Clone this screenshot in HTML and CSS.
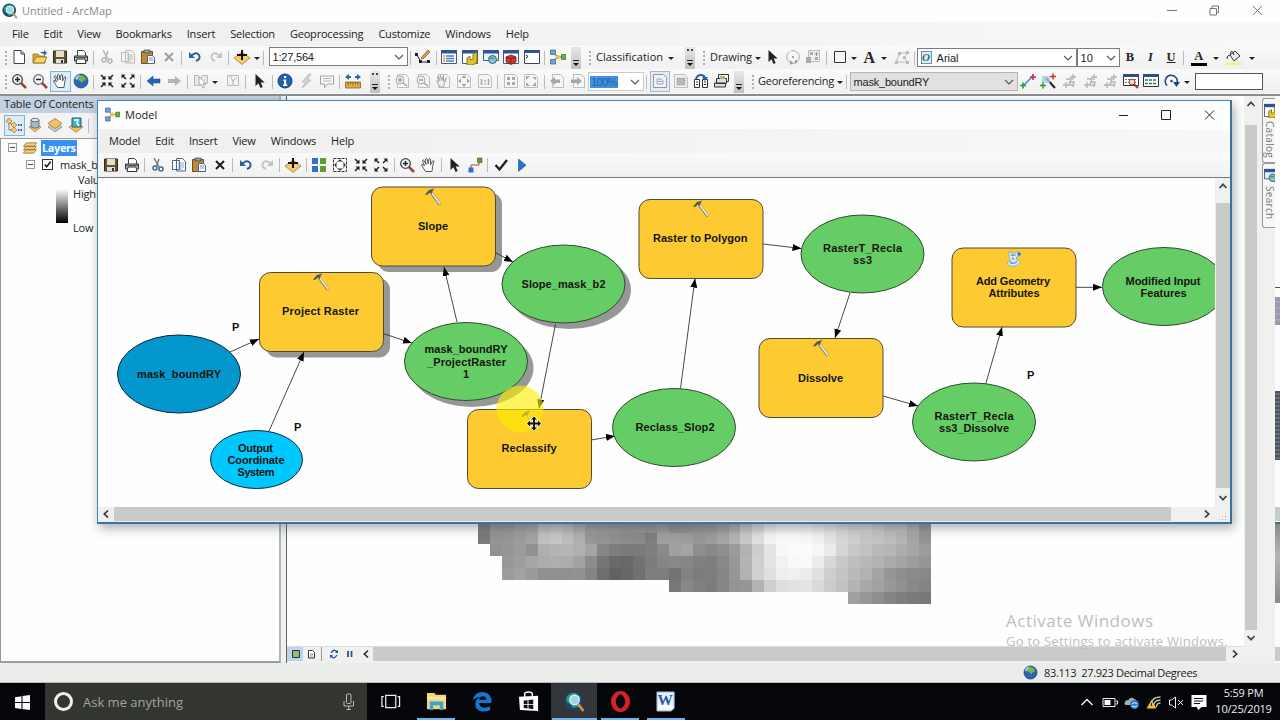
FILE: index.html
```
<!DOCTYPE html>
<html lang="en">
<head>
    <meta charset="UTF-8">
    <title>Untitled - ArcMap</title>
    <link rel="stylesheet" href="styles.css">
</head>
<body>
    <!-- Icons -->
    <svg class="sprite">
        <symbol id="new" viewBox="0 0 16 16"><path d="M3 1.500h7l3.500 3.500v9.500H3z" fill="#fff" stroke="#444"/><path d="M10 1.500V5h3.500" fill="none" stroke="#444"/></symbol>
        <symbol id="open" viewBox="0 0 16 16"><path d="M1 14V5h5l1 2h6v7z" fill="#d9a928" stroke="#8f6f1c" stroke-width=".8"/><path d="M1 14l3-6h11l-3 6z" fill="#f7d568" stroke="#8f6f1c" stroke-width=".8"/><path d="M8 4q2-2 4-1V1l3 3-3 3V5q-2-1-4-1z" fill="#2b66a8"/></symbol>
        <symbol id="save" viewBox="0 0 16 16"><path d="M1.500 2h13v12h-13z" fill="#5f5536" stroke="#2e2a1c"/><path d="M4 2h8v6H4z" fill="#e8dfc0"/><path d="M4 10h8v4H4z" fill="#ddd"/><path d="M9 11h2v3H9z" fill="#333"/></symbol>
        <symbol id="print" viewBox="0 0 16 16"><path d="M4.500 1.500h6l2 2V8h-8z" fill="#fff" stroke="#444"/><path d="M1.500 7h13v5h-13z" fill="#bbb" stroke="#333"/><path d="M4 10h8l1 4.500H3z" fill="#fff" stroke="#333"/><path d="M2 8.500h12" stroke="#555"/></symbol>
        <symbol id="cut" viewBox="0 0 16 16"><g fill="none" stroke="#446a90" stroke-width="1.500"><path d="M4 1l5 9M9 2L6.500 9" stroke="#778"/><circle cx="5" cy="11" r="2"/><circle cx="11" cy="12" r="2"/></g></symbol>
        <symbol id="cutg" viewBox="0 0 16 16"><g fill="none" stroke="#b4b4b4" stroke-width="1.500"><path d="M4 1l5 9M9 2L6.500 9"/><circle cx="5" cy="11" r="2"/><circle cx="11" cy="12" r="2"/></g></symbol>
        <symbol id="copy" viewBox="0 0 16 16"><g fill="#fff" stroke="#51677f"><path d="M1.500 3.500h7v9h-7zM5.500 1.500h6l3 3v9.500h-9z"/><path d="M7 6h6M7 8h6M7 10h6M7 12h4" stroke="#6a95c5" stroke-width=".8"/></g></symbol>
        <symbol id="copyg" viewBox="0 0 16 16"><g fill="#f4f4f4" stroke="#bbb"><path d="M1.500 3.500h7v9h-7zM5.500 1.500h6l3 3v9.500h-9z"/><path d="M7 6h6M7 8h6M7 10h6M7 12h4"/></g></symbol>
        <symbol id="paste" viewBox="0 0 16 16"><path d="M1.500 2.500h11v12h-11z" fill="#c08a38" stroke="#6d4e1e"/><path d="M4 1h6v3H4z" fill="#999" stroke="#444" stroke-width=".7"/><path d="M7.500 6.500h5l2 2v6h-7z" fill="#fff" stroke="#51677f"/><path d="M9 9h4M9 11h4" stroke="#6a95c5"/></symbol>
        <symbol id="del" viewBox="0 0 16 16"><path d="M4 4l8 8M12 4l-8 8" stroke="#1c1c1c" stroke-width="2"/></symbol>
        <symbol id="delg" viewBox="0 0 16 16"><path d="M4 4l8 8M12 4l-8 8" stroke="#9a9a9a" stroke-width="1.800"/></symbol>
        <symbol id="undo" viewBox="0 0 16 16"><path d="M4 7q5-5 8-1q2 4-3 6" fill="none" stroke="#2f5f9e" stroke-width="2"/><path d="M2 3v6h6z" fill="#2f5f9e"/></symbol>
        <symbol id="redo" viewBox="0 0 16 16"><path d="M12 7Q7 2 4 6q-2 4 3 6" fill="none" stroke="#c2c2c2" stroke-width="1.800"/><path d="M14 3v6H8z" fill="#c2c2c2"/></symbol>
        <symbol id="add" viewBox="0 0 16 16"><path d="M0 9l8-6 8 6-8 6.500z" fill="#f3cb72" stroke="#a8812f" stroke-width=".8"/><path d="M8 1v10M3 6h10" stroke="#111" stroke-width="2"/></symbol>
        <symbol id="editor" viewBox="0 0 16 16"><path d="M2 6l4 7h8" fill="none" stroke="#222"/><path d="M0 4h3v3H0zM4 11h3v3H4zM12 11h3v3h-3z" fill="#222"/><path d="M6 9l7-8 2 2-7 7z" fill="#d9a34c" stroke="#6d4e1e" stroke-width=".7"/></symbol>
        <symbol id="winlist" viewBox="0 0 16 16"><path d="M.5 1.500h15v13H.5z" fill="#fff" stroke="#445a80"/><path d="M0 1h16v3.500H0z" fill="#2f5597"/><path d="M2 7h2M2 9.500h2M2 12h2" stroke="#d58a2a" stroke-width="1.300"/><path d="M5 7h8M5 9.500h8M5 12h8" stroke="#3f7fbf" stroke-width="1.300"/></symbol>
        <symbol id="wincat" viewBox="0 0 16 16"><path d="M.5 1.500h15v13H.5z" fill="#fff" stroke="#445a80"/><path d="M0 1h16v3.500H0z" fill="#2f5597"/><path d="M5 9l3-2v4l3-1V5l4-2v11l-5 2H5z" fill="#e3c32b" stroke="#77630e" stroke-width=".8"/></symbol>
        <symbol id="winsearch" viewBox="0 0 16 16"><path d="M.5 1.500h15v10H.5z" fill="#e6eef6" stroke="#445a80"/><path d="M0 1h16v3.500H0z" fill="#2f5597"/><circle cx="9.500" cy="10.500" r="4" fill="#8ac4dc" stroke="#2c5d7c"/><path d="M7 10q2-2 4 0" stroke="#4c9b42" stroke-width="1.600" fill="none"/></symbol>
        <symbol id="toolbox" viewBox="0 0 16 16"><path d="M.5 1.500h15v13H.5z" fill="#fff" stroke="#445a80"/><path d="M0 1h16v3.500H0z" fill="#2f5597"/><path d="M3 8l5-2 5 2v5l-5 2.500-5-2.500z" fill="#c53a2c" stroke="#6f1a12" stroke-width=".8"/><path d="M3 8l5 2 5-2M8 10v5" stroke="#6f1a12" fill="none" stroke-width=".7"/></symbol>
        <symbol id="python" viewBox="0 0 16 16"><path d="M.5 1.500h15v13H.5z" fill="#fff" stroke="#3a4662"/><path d="M0 1h16v3H0z" fill="#2f5597"/><path d="M2 6l2 1.500L2 9" fill="none" stroke="#222"/></symbol>
        <symbol id="model" viewBox="0 0 16 16"><path d="M3 4l5 4-5 4M8 8h6" fill="none" stroke="#555"/><path d="M.5 1h5v4.500H.5zM.5 10.500h5V15H.5z" fill="#6da2dc" stroke="#34618f" stroke-width=".7"/><path d="M5 8l3-2.500L11 8l-3 2.500z" fill="#f1c232"/><path d="M11.500 5.500h4v5h-4z" fill="#62b946" stroke="#2f6b1e" stroke-width=".7"/></symbol>
        <symbol id="zoomin" viewBox="0 0 16 16"><path d="M10 10l5 5" stroke="#8f4a3a" stroke-width="2.500"/><circle cx="6.500" cy="6.500" r="4.800" fill="#f4f8fb" stroke="#444" stroke-width="1.300"/><path d="M4 6.500h5M6.500 4v5" stroke="#222" stroke-width="1.500"/></symbol>
        <symbol id="zoomout" viewBox="0 0 16 16"><path d="M10 10l5 5" stroke="#8f4a3a" stroke-width="2.500"/><circle cx="6.500" cy="6.500" r="4.800" fill="#f4f8fb" stroke="#666" stroke-width="1.300"/><path d="M4 6.500h5" stroke="#222" stroke-width="1.500"/></symbol>
        <symbol id="pan" viewBox="0 0 16 16"><path d="M5.500 14.500L1.500 8q0-1.500 2 0L4.500 9 2.500 3.500q.5-1.500 1.500 0l2 4L5.500 2q1-1.500 1.700 0l1 5L9 2q1-1.200 1.600.2L10.500 8l2-4q1.300-.8 1.300.5L12.500 10l-.5 4.500z" fill="#fff" stroke="#4a4a4a" stroke-width=".9"/></symbol>
        <symbol id="globe" viewBox="0 0 16 16"><circle cx="8" cy="8" r="7" fill="#2b65b5" stroke="#1d3f6e" stroke-width=".7"/><path d="M6 3q3-2 6 1l1 3-3 1-1 2-2-2-2-1z" fill="#77b843"/><path d="M2 6q1-4 5-4.500L4 7z" fill="#9fd0f2"/></symbol>
        <symbol id="fixin" viewBox="0 0 16 16"><path d="M2 2l4 4M14 2l-4 4M2 14l4-4M14 14l-4-4" stroke="#222" stroke-width="1.600"/><path d="M6.500 2.500v4h-4zM9.500 2.500v4h4zM6.500 13.500v-4h-4zM9.500 13.500v-4h4z" fill="#222"/></symbol>
        <symbol id="fixout" viewBox="0 0 16 16"><path d="M3 3l3 3M13 3l-3 3M3 13l3-3M13 13l-3-3" stroke="#222" stroke-width="1.500"/><path d="M1.500 1.500h4l-4 4zM14.500 1.500h-4l4 4zM1.500 14.500h4l-4-4zM14.500 14.500h-4l4-4z" fill="#222"/></symbol>
        <symbol id="back" viewBox="0 0 16 16"><path d="M1 8l6-5v3h7v4H7v3z" fill="#2765b8" stroke="#1b4a8a" stroke-width=".5"/></symbol>
        <symbol id="fwd" viewBox="0 0 16 16"><path d="M15 8L9 3v3H2v4h7v3z" fill="#b4b4b4"/></symbol>
        <symbol id="selg" viewBox="0 0 16 16"><path d="M1.500 2.500h4l2 3 2-3h5v8l-4 1-9 1z" fill="#e9e9e9" stroke="#b8b8b8"/><path d="M6 4v9l2-2 2 4 1.500-1L10 10.500h3z" fill="#fff" stroke="#aaa"/></symbol>
        <symbol id="clearg" viewBox="0 0 16 16"><path d="M2.500 2.500h11v10h-11z" fill="#f3f3f3" stroke="#bbb"/><path d="M5 3l3 5 4-4M8 8v4" stroke="#b0b0b0" fill="none"/></symbol>
        <symbol id="arrow" viewBox="0 0 16 16"><path d="M4.500 1v12l3-2.800 2 4.800 2.200-1-2-4.500h4z" fill="#222"/></symbol>
        <symbol id="info" viewBox="0 0 16 16"><circle cx="8" cy="8" r="7" fill="#2261b2" stroke="#123c77"/><path d="M7 3h2.200v2H7zM6.500 6.500h2.700v5h1V13H6v-1.500h1V8h-.7z" fill="#fff"/></symbol>
        <symbol id="bolt" viewBox="0 0 16 16"><path d="M11 1L4 9h4l-4 6 9-8H9l4-6z" fill="#d6d6d6" stroke="#bbb"/></symbol>
        <symbol id="popup" viewBox="0 0 16 16"><path d="M1.500 3h13v8h-6l-3 3.500V11h-4z" fill="#fafafa" stroke="#a2a2a2"/><path d="M4 5.500h8M4 8h8" stroke="#b5b5b5"/></symbol>
        <symbol id="measure" viewBox="0 0 16 16"><path d="M.5 9h15v6H.5z" fill="#e1a844" stroke="#8c6420" stroke-width=".8"/><path d="M3 9v3M5.500 9v2M8 9v3M10.500 9v2M13 9v3" stroke="#6d4e1e" stroke-width=".8"/><path d="M0 4l4-3v2h2v2H4v2zM16 4l-4-3v2h-2v2h2v2z" fill="#2b64ad"/></symbol>
        <symbol id="pg" viewBox="0 0 16 16"><path d="M3.500 1.500h8l3 3v10h-11z" fill="#f6f6f6" stroke="#bdbdbd"/></symbol>
        <symbol id="pgin" viewBox="0 0 16 16"><use href="#pg"/><circle cx="6" cy="7" r="4" fill="#eee" stroke="#a8a8a8"/><path d="M4 7h4M6 5v4M9 10l4 3" stroke="#a0a0a0" stroke-width="1.500"/></symbol>
        <symbol id="pgout" viewBox="0 0 16 16"><use href="#pg"/><circle cx="6" cy="7" r="4" fill="#eee" stroke="#a8a8a8"/><path d="M4 7h4M9 10l4 3" stroke="#a0a0a0" stroke-width="1.500"/></symbol>
        <symbol id="pgpan" viewBox="0 0 16 16"><use href="#pg"/><path d="M5 14L1.500 8l2 .5-1-5 2 4 1-5 1.500 5 1.500-5v6l3-4-2 6-1 3.500z" fill="#eee" stroke="#a8a8a8"/></symbol>
        <symbol id="pgfull" viewBox="0 0 16 16"><path d="M1.500 1.500h10l3 3v10h-13z" fill="#f6f6f6" stroke="#bdbdbd"/><path d="M8 2l2.500 3h-5zM8 14l2.500-3h-5zM2 8l3-2.500v5zM14 8l-3-2.500v5z" fill="#a5a5a5"/></symbol>
        <symbol id="pg11" viewBox="0 0 16 16"><path d="M1.500 1.500h10l3 3v10h-13z" fill="#f6f6f6" stroke="#bdbdbd"/><path d="M4.500 6v6M11.500 6v6M8 7v1.500M8 10v1.500" stroke="#a5a5a5" stroke-width="1.500"/></symbol>
        <symbol id="pgfix" viewBox="0 0 16 16"><path d="M1.500 1.500h10l3 3v10h-13z" fill="#f6f6f6" stroke="#bdbdbd"/><path d="M4 4h3v3H4zM9 4h3v3H9zM4 9h3v3H4zM9 9h3v3H9z" fill="#a8a8a8"/></symbol>
        <symbol id="pgfix2" viewBox="0 0 16 16"><path d="M1.500 1.500h10l3 3v10h-13z" fill="#f6f6f6" stroke="#bdbdbd"/><path d="M3 3h4L3 7zM13 4v3L9 4zM3 13V9l4 4zM13 13H9l4-4z" fill="#a8a8a8"/></symbol>
        <symbol id="pgback" viewBox="0 0 16 16"><use href="#pg"/><path d="M1 8l5-4v2.500h5v3.500H6v2.500z" fill="#a8a8a8"/></symbol>
        <symbol id="pgfwd" viewBox="0 0 16 16"><use href="#pg"/><path d="M12 8L7 4v2.500H1v3.500h6v2.500z" fill="#a8a8a8"/></symbol>
        <symbol id="draft" viewBox="0 0 16 16"><path d="M1.500 1.500h10l3 3v10h-13z" fill="#eef1f5" stroke="#8c97a8"/><path d="M5 6h4l2 2v3H5zM6 8.500h4" fill="none" stroke="#9aa5b5"/></symbol>
        <symbol id="focus" viewBox="0 0 16 16"><path d="M1.500 1.500h10l3 3v10h-13z" fill="#f1f1f1" stroke="#bdbdbd"/><path d="M4 5h8v7H4z" fill="#b9b9b9" stroke="#999" stroke-dasharray="1 1"/></symbol>
        <symbol id="swap" viewBox="0 0 16 16"><path d="M1.500 6.500h5v8h-5zM9.500 6.500h5v8h-5z" fill="#fff" stroke="#333"/><path d="M3 6q1-4 5-4 3 0 4 3" fill="none" stroke="#2560ab" stroke-width="2"/><path d="M9 4h6l-3 4z" fill="#2560ab"/><path d="M3 9h2M3 11.500h2M11 9h2M11 11.500h2" stroke="#333"/></symbol>
        <symbol id="pages" viewBox="0 0 16 16"><path d="M4.500 1.500h10v7h-10z" fill="#fff" stroke="#333"/><path d="M2.500 5.500h10v5h-10zM.5 10h11v4H.5z" fill="#ddd" stroke="#333"/><path d="M6 3h5v3H6z" fill="#9cb98a"/></symbol>
        <symbol id="rot" viewBox="0 0 16 16"><circle cx="8" cy="8" r="6.300" fill="none" stroke="#aaa" stroke-dasharray="12 1.500"/><path d="M5 11l3 3-3 2zM10 11v4l3-3z" fill="#999"/><circle cx="8" cy="8" r="1" fill="#888"/></symbol>
        <symbol id="grp" viewBox="0 0 16 16"><path d="M3.500 1.500h11v11h-11z" fill="#eee" stroke="#bbb"/><path d="M5 3h3v3H5zM10 8h3v3h-3zM1 8h5v6H1z" fill="#aaa"/><path d="M11.500 3v4M9.500 5h4" stroke="#999"/></symbol>
        <symbol id="rect" viewBox="0 0 16 16"><path d="M2.500 2.500h11v11h-11z" fill="#f4f4f4" stroke="#333"/></symbol>
        <symbol id="vertex" viewBox="0 0 16 16"><path d="M2 13l4-9h8l-4 5 4 4z" fill="none" stroke="#bbb"/><path d="M4 3h3v3H4zM12 2h3v3h-3zM1 12h3v3H1zM12 12h3v3h-3zM9 7h3v3H9z" fill="#bbb"/></symbol>
        <symbol id="bucket" viewBox="0 0 16 16"><path d="M4 6l5-4 5 5-6 5z" fill="#eee" stroke="#333"/><path d="M4 5Q6-1 8 6M4 6q-3 0-3 4" stroke="#333" fill="none"/><path d="M0 13.500h16V16H0z" fill="#f3f08a"/></symbol>
        <symbol id="ctrl" viewBox="0 0 16 16"><path d="M4 12l8-8" stroke="#3e7fcf" stroke-width="1.500"/><path d="M0 12.500h6M3 9.500v6" stroke="#249a3b" stroke-width="1.600"/><path d="M10 4h6M13 1v6" stroke="#d02c2c" stroke-width="1.600"/></symbol>
        <symbol id="auto" viewBox="0 0 16 16"><path d="M6 5l9 10" stroke="#222" stroke-width="2"/><path d="M2 3h8v7H2z" fill="#9bd0e8" opacity=".8"/><path d="M0 12.500h6M3 9.500v6" stroke="#249a3b" stroke-width="1.500"/><path d="M10 3.500h6M13 .5v6" stroke="#d02c2c" stroke-width="1.500"/></symbol>
        <symbol id="ctrlg" viewBox="0 0 16 16"><path d="M2 12h6M5 9v6M9 4h6M12 1v6M5 6h5l-2 6h4M8 9h5l-1 5" fill="none" stroke="#b4b4b4" stroke-width="1.400"/></symbol>
        <symbol id="viewlink" viewBox="0 0 16 16"><path d="M.5 1.500h15v11H.5z" fill="#fff" stroke="#333"/><path d="M0 1h16v3H0z" fill="#2c4e84"/><path d="M2 6.500h12M2 9.500h12" stroke="#3d8a61" stroke-dasharray="2 1"/><circle cx="9" cy="9" r="3" fill="#e9d5cb" stroke="#a33"/><path d="M11 11l4 4" stroke="#a33" stroke-width="2"/></symbol>
        <symbol id="linktab" viewBox="0 0 16 16"><path d="M.5 1.500h15v12H.5z" fill="#fff" stroke="#333"/><path d="M0 1h16v3H0z" fill="#2c4e84"/><path d="M2 7h12M2 10.500h12" stroke="#347a52" stroke-width="1.500" stroke-dasharray="3 1"/></symbol>
        <symbol id="rotate" viewBox="0 0 16 16"><path d="M3 12.500A6 6 0 1 1 13 10" fill="none" stroke="#27447e" stroke-width="1.700"/><path d="M9 9h7l-3.500 5z" fill="#27447e"/><circle cx="7.500" cy="8" r="1.300" fill="#27447e"/></symbol>
        <symbol id="grid4" viewBox="0 0 16 16"><path d="M1 1h6v6H1zM1 9h6v6H1z" fill="#2e6fd1"/><path d="M9 1h6v6H9zM9 9h6v6H9z" fill="#5f9f2d"/></symbol>
        <symbol id="extent" viewBox="0 0 16 16"><path d="M1.500 1.500h13v13h-13z" fill="#fff" stroke="#333" stroke-dasharray="3 1"/><circle cx="8" cy="8" r="4.500" fill="none" stroke="#888"/><path d="M8 2l2 2.500H6zM8 14l2-2.500H6zM2 8l2.500-2v4zM14 8l-2.500-2v4z" fill="#333"/></symbol>
        <symbol id="connect" viewBox="0 0 16 16"><path d="M4 11V8h8V4" fill="none" stroke="#a04a3a"/><path d="M1.500 10.500h5v5h-5z" fill="#2e6fd1"/><path d="M10.500 1h4.500v4.500h-4.500z" fill="#5f9f2d" stroke="#365f19" stroke-width=".6"/></symbol>
        <symbol id="check" viewBox="0 0 16 16"><path d="M2.500 8l4 4.500L14 3" fill="none" stroke="#222" stroke-width="2.400"/></symbol>
        <symbol id="run" viewBox="0 0 16 16"><path d="M4.500 2l7.500 6.200-7.500 6.200z" fill="#2273d3" stroke="#1b549c" stroke-width=".6"/></symbol>
        <symbol id="order" viewBox="0 0 16 16"><path d="M3 5v8h5M3 6l5 2" stroke="#a07a35" fill="none"/><path d="M0 4l3-3 3 3-3 3zM5 8l3-3 3 3-3 3zM5 13l3-3 3 3-3 3z" fill="#f3c66b" stroke="#a07a35" stroke-width=".7"/><path d="M12 8h4M12 13h4" stroke="#333" stroke-width="1.500" stroke-dasharray="1.500 1"/></symbol>
        <symbol id="source" viewBox="0 0 16 16"><path d="M2 10l6-3 6 3-6 5z" fill="#efc05e" stroke="#a07a35" stroke-width=".7"/><path d="M4 3v7q4 2.500 8 0V3z" fill="#a9b5c9" stroke="#525d70" stroke-width=".8"/><ellipse cx="8" cy="3" rx="4" ry="1.700" fill="#e4eaf3" stroke="#525d70" stroke-width=".8"/></symbol>
        <symbol id="visib" viewBox="0 0 16 16"><path d="M1 10l7-4.500L15 10l-7 5z" fill="#c3c3c3" stroke="#888" stroke-width=".7"/><path d="M1 6.500L8 1.500l7 5-7 5z" fill="#f0c26a" stroke="#a07a35" stroke-width=".8"/></symbol>
        <symbol id="selec" viewBox="0 0 16 16"><path d="M1 10l7-4.500L15 10l-7 5.500z" fill="#efc05e" stroke="#a07a35" stroke-width=".7"/><path d="M4 1h9v9H4z" fill="#3fb5c8" stroke="#2c5d7c"/><path d="M6 3h4l-1 3 2 3" stroke="#fff" stroke-width="1.500" fill="none"/></symbol>
        <symbol id="layers" viewBox="0 0 16 16"><path d="M1 14l3-4h11l-3 4zM1 10.500l3-4h11l-3 4zM1 7l3-4h11l-3 4z" fill="#f0cf86" stroke="#9a7433" stroke-width=".9"/></symbol>
        <symbol id="hammer" viewBox="0 0 18 18"><path d="M6.500 4.500l9 12" stroke="#8f8a78" stroke-width="3"/><path d="M7 4.500l8.500 11.500" stroke="#f0ecd9" stroke-width="1.500"/><path d="M.5 6.500l4-4.500L10 .5 8 3 7.500 6l-2-1.500-3 2.500z" fill="#55585a"/></symbol>
        <symbol id="script" viewBox="0 0 16 16"><path d="M3 1l4 2 6-2 2 2-1 2-3 1-1 3q3 0 4 3-1 3-5 3.500H3L1 12l4-1.500Q2 7 3 1z" fill="#dcecf8" stroke="#77a8d0" stroke-width=".8"/><path d="M5 4q2 2 5 0M4 12q4 2 7-1M6 7l2 2" stroke="#5b9fd4" stroke-width="1.500" fill="none"/><circle cx="13" cy="3.500" r="1.800" fill="#2c7ac0"/></symbol>
        <symbol id="up" viewBox="0 0 10 10"><path d="M1.500 7L5 3.300 8.500 7" fill="none" stroke="#444" stroke-width="1.700"/></symbol>
        <symbol id="down" viewBox="0 0 10 10"><path d="M1.500 3L5 6.700 8.500 3" fill="none" stroke="#444" stroke-width="1.700"/></symbol>
        <symbol id="chev" viewBox="0 0 10 10"><path d="M1 3l4 4 4-4" fill="none" stroke="#555" stroke-width="1.100"/></symbol>
        <symbol id="left" viewBox="0 0 10 10"><path d="M7 1.500L3.300 5 7 8.500" fill="none" stroke="#333" stroke-width="1.700"/></symbol>
        <symbol id="right" viewBox="0 0 10 10"><path d="M3 1.500L6.700 5 3 8.500" fill="none" stroke="#333" stroke-width="1.700"/></symbol>
        <symbol id="arcmap" viewBox="0 0 20 20"><circle cx="9" cy="9" r="8.500" fill="#174a72"/><path d="M2 7q3-6 9-5l5 4-3 3 1 6-6 1q-1-4-5-5z" fill="#2f9a7d"/><circle cx="10" cy="8.500" r="4.500" fill="#9fd3e6" stroke="#e3f1f5" stroke-width="1.300"/><path d="M13.500 12.500l5 6.500" stroke="#c79a52" stroke-width="2.500"/></symbol>
    </svg>

    <header class="titlebar">
        <svg class="app-icon"><use href="#arcmap"/></svg>
        <span>Untitled - ArcMap</span>
        <svg class="win-buttons" viewBox="0 0 100 20"><path d="M0 9.500h10M43 7.500h6.500V14H43zM45 7V5h6.500v6.500H50M86 5l9 9M95 5l-9 9" fill="none" stroke="#777"/></svg>
    </header>
    <nav class="menubar">
        <span>File</span><span>Edit</span><span>View</span><span>Bookmarks</span><span>Insert</span><span>Selection</span><span>Geoprocessing</span><span>Customize</span><span>Windows</span><span>Help</span>
    </nav>

    <div class="toolrow">
        <div class="toolbar standard">
            <div class="tools" data-icons=": new open save print | cutg copyg paste delg | undo redo | add v |"></div>
            <div class="combo scale">1:27,564<svg><use href="#chev"/></svg></div>
            <div class="tools" data-icons="| editor | winlist wincat winsearch toolbox python | model"></div>
            <div class="overflow"></div>
        </div>
        <div class="toolbar classification">
            <div class="tools" data-icons=":"></div><span class="label">Classification</span><div class="tools" data-icons="v"></div>
            <div class="overflow dots"></div>
        </div>
        <div class="toolbar drawing">
            <div class="tools" data-icons=":"></div><span class="label">Drawing</span>
            <div class="tools" data-icons="v arrow rot grp | rect v"></div>
            <b class="letter big">A</b>
            <div class="tools" data-icons="v _ vertex |"></div>
            <div class="combo font"><i class="font-badge">O</i>Arial<svg><use href="#chev"/></svg></div>
            <div class="combo size">10<svg><use href="#chev"/></svg></div>
            <b class="letter">B</b><i class="letter">I</i><u class="letter">U</u>
            <div class="tools" data-icons="|"></div>
            <b class="letter color">A</b>
            <div class="tools" data-icons="_ v _ bucket _ v"></div>
        </div>
    </div>
    <div class="toolrow">
        <div class="toolbar nav">
            <div class="tools" data-icons=": zoomin zoomout pan* globe | fixin fixout | back fwd | selg v _ clearg | arrow | info bolt popup | measure"></div>
            <div class="overflow dots"></div>
        </div>
        <div class="toolbar layout">
            <div class="tools" data-icons=": pgin pgout pgpan pgfull pg11 | pgfix pgfix2 | pgback pgfwd"></div>
            <div class="combo percent"><em>100%</em><svg><use href="#chev"/></svg></div>
            <div class="tools" data-icons="| draft* focus swap pages"></div>
            <div class="overflow"></div>
        </div>
        <div class="toolbar georef">
            <div class="tools" data-icons=":"></div><span class="label">Georeferencing</span>
            <div class="tools" data-icons="v |"></div>
            <div class="combo layer">mask_boundRY<svg><use href="#chev"/></svg></div>
            <div class="tools" data-icons="ctrl auto ctrlg ctrlg ctrlg viewlink linktab rotate v"></div>
            <div class="textbox"></div>
        </div>
    </div>

    <main>
        <aside class="toc">
            <div class="toc-title">Table Of Contents</div>
            <div class="tools toc-tools" data-icons="order* source visib selec |"></div>
            <div class="tree">
                <div class="row"><span class="expander"></span><svg class="layer-icon"><use href="#layers"/></svg><b class="selected">Layers</b></div>
                <div class="row child"><span class="expander"></span><span class="checkbox"><svg viewBox="0 0 10 10"><path d="M2 5l2 2.500L8.500 2" fill="none" stroke="#111" stroke-width="1.600"/></svg></span>mask_boundRY</div>
                <div class="value">Value</div>
                <div class="legend">
                    <div class="ramp"></div>
                    <div class="range"><span>High</span><span>Low</span></div>
                </div>
            </div>
        </aside>

        <section class="mapview">
            <div class="map">
                <svg id="raster" class="raster"></svg>
                <div class="watermark"><p class="wm-title">Activate Windows</p><p class="wm-sub">Go to Settings to activate Windows.</p></div>
            </div>
            <div class="map-bottom">
                <svg class="view-tabs" viewBox="0 0 74 14"><path d="M0 0h16v14H0z" fill="#b9d5ef"/><path d="M5.500 3.500h7v7h-7z" fill="#8fc06b" stroke="#333"/><path d="M21.500 3.500h4l2 2v5.500h-6z" fill="#fff" stroke="#333"/><path d="M23 7h3M23 9h3" stroke="#555" stroke-width=".7"/><path d="M34.500 0v14" stroke="#999"/><path d="M44 6q3-5 6-1M50 8q-3 5-6 1" fill="none" stroke="#27548f" stroke-width="1.300"/><path d="M51 3v3h-3zM43 11V8h3z" fill="#27548f"/><path d="M61 4v6M64.500 4v6" stroke="#27548f" stroke-width="1.800"/></svg>
                <svg class="arr"><use href="#left"/></svg>
                <div class="thumb"></div>
                <svg class="arr"><use href="#right"/></svg>
            </div>
        </section>
        <div class="map-scroll">
            <svg class="arr"><use href="#up"/></svg>
            <div class="thumb"></div>
            <svg class="arr"><use href="#down"/></svg>
        </div>
        <aside class="dock">
            <div class="tab"><svg viewBox="0 0 11 15"><use href="#wincat" width="15" height="15"/></svg><span>Catalog</span></div>
            <div class="tab"><svg viewBox="0 0 11 15"><use href="#winsearch" width="15" height="15"/></svg><span>Search</span></div>
        </aside>
        <div class="edge"></div>
    </main>

    <div class="statusbar"><svg><use href="#globe"/></svg><span>83.113&nbsp; 27.923 Decimal Degrees</span></div>

    <footer class="taskbar">
        <div class="start"><svg viewBox="0 0 14 14"><path d="M0 2l6-.9v5.500H0zM7 1l7-1v6.600H7zM0 7.500h6V13l-6-.9zM7 7.500h7V14l-7-1z" fill="#fff"/></svg></div>
        <div class="search">
            <span class="ring"></span><span class="hint">Ask me anything</span>
            <svg viewBox="0 0 12 18"><rect x="4" y="1" width="4.500" height="9.500" rx="1" fill="none" stroke="#bbb"/><path d="M1.500 8v5h9.500V8M6.250 13v4M4 16.500h4.500" fill="none" stroke="#bbb"/></svg>
        </div>
        <div class="task"><svg viewBox="0 0 22 22"><path d="M6 4.500h10.500v13H6zM4 6H2v10h2M18.500 6h2v10h-2" fill="none" stroke="#eee" stroke-width="1.300"/></svg></div>
        <div class="task open"><svg viewBox="0 0 22 22"><path d="M1 2h8l1 2h11v15H1z" fill="#f6d475"/><path d="M1 6h20v3H1z" fill="#fbe7a5"/><path d="M4 11h14v9h-3.500v-5h-7v5H4z" fill="#36a5d5"/></svg></div>
        <div class="task"><svg viewBox="0 0 22 22"><path d="M1 10Q2 1 11.500 1 21 2 20.500 12.500H7.500Q8 17 12.500 17.500q4 0 6.500-1.500v4q-4 2-8.500 1.500Q3 20 3.500 13 4 8 9 6 4 6.500 1 10zm6.500-.8h7.500Q15 5.500 11.500 5.500 8 5.500 7.500 9.200z" fill="#1377cf" fill-rule="evenodd"/></svg></div>
        <div class="task"><svg viewBox="0 0 22 22"><path d="M1 6l20-1v16L2 20z" fill="#fff"/><path d="M7 7V3q0-2 4-2t4 2v3" fill="none" stroke="#fff" stroke-width="1.500"/><path d="M6 10l4-.4v3.900H6zM11 9.500l5-.5v4.500h-5zM6 14.500h4v3.800l-4-.4zM11 14.500h5V19l-5-.6z" fill="#111"/></svg></div>
        <div class="task open active"><svg><use href="#arcmap"/></svg></div>
        <div class="task open"><svg viewBox="0 0 22 22"><ellipse cx="11" cy="11" rx="7.500" ry="8.500" fill="none" stroke="#d8202a" stroke-width="5"/><ellipse cx="11" cy="11" rx="4" ry="7.500" fill="#07080c"/></svg></div>
        <div class="task open"><svg viewBox="0 0 22 22"><path d="M1 1h18v17l-3 3H1z" fill="#eaf1fa" stroke="#9db4d3"/><path d="M2 15h16v4H2z" fill="#fff"/><text x="1.500" y="14.500" class="word">W</text></svg></div>
        <div class="tray">
            <svg viewBox="0 0 130 22"><path d="M5 14l5.500-5.500L16 14" fill="none" stroke="#eee" stroke-width="1.500"/><path d="M26.500 7.500h12v8h-12zM39.500 10h1.500v3h-1.500" fill="none" stroke="#eee"/><path d="M28 9h6v5h-6z" fill="#fff"/><path d="M48 13q0-4 4-4 2-4 6-1 3 1 3 6H49z" fill="#a9adb3"/><circle cx="58" cy="13.500" r="4.500" fill="#2d7cc5"/><path d="M55.500 13q2.500-3 5 0M60.500 15q-2.500 2-5 0" stroke="#fff" fill="none"/><path d="M74 16q0-10 10-10M77 16q0-7 7-7M80 16q0-4 4-4" stroke="#bbb" stroke-width="1.400" fill="none"/><path d="M70 17.500L75 9l5 8.500z" fill="#f5b932"/><path d="M75 12v3" stroke="#222"/><path d="M93 9h2l4-3v11l-4-3h-2z" fill="none" stroke="#eee"/><path d="M101.500 9l5 5M106.500 9l-5 5" stroke="#eee"/><path d="M115 4h15v12h-5l-3 3-2-3h-5z" fill="#fff"/><path d="M117.500 7.500h9M117.500 10h9M117.500 12.500h6" stroke="#111"/></svg>
        </div>
        <div class="clock"><span>5:59 PM</span><span>10/25/2019</span></div>
    </footer>

    <!-- ModelBuilder window -->
    <div class="window">
        <div class="window-title">
            <svg class="model-icon"><use href="#model"/></svg><span>Model</span>
            <svg class="win-buttons" viewBox="0 0 100 20"><path d="M0 10.500h9M42.500 5.500h9v9h-9zM86 5.500l9 9M95 5.500l-9 9" fill="none" stroke="#222"/></svg>
        </div>
        <nav class="menubar"><span>Model</span><span>Edit</span><span>Insert</span><span>View</span><span>Windows</span><span>Help</span></nav>
        <div class="tools window-tools" data-icons="save print | cut copy paste del | undo redo | add | grid4 extent fixin fixout | zoomin pan | arrow connect | check run"></div>
        <div class="window-body">
            <svg class="canvas" viewBox="98 178 1117 329">
                <defs>
                    <marker id="head" viewBox="0 0 9 7" refX="9" refY="3.500" markerWidth="9" markerHeight="7" markerUnits="userSpaceOnUse" orient="auto"><path d="M0 0l9 3.500L0 7z"/></marker>
                </defs>
                <g class="shadow">
                    <rect x="378" y="193" width="124" height="79" rx="11"/>
                    <rect x="266" y="278.500" width="124" height="79" rx="11"/>
                    <ellipse cx="472" cy="368" rx="61.500" ry="39"/>
                    <ellipse cx="569.500" cy="290" rx="61.500" ry="39"/>
                </g>
                <g class="links">
                    <path d="M230 352l29-13"/><path d="M269 431l35-79"/><path d="M383 333.500l29 9.500"/>
                    <path d="M457 322l-13-55"/><path d="M496 253l17 9"/><path d="M555.500 324L539 408.500"/>
                    <path d="M591 440l24-4"/><path d="M680.500 388.500L695 278.500"/><path d="M763 244l38.500 4.500"/>
                    <path d="M850 293l-15 45"/><path d="M883 396l35 10"/><path d="M986 383l16-56"/><path d="M1076 287.300h26"/>
                </g>
                <g class="tool">
                    <rect x="371.500" y="187" width="124" height="79" rx="11"/>
                    <rect x="259.500" y="272.500" width="124" height="79" rx="11"/>
                    <rect x="467.500" y="409.500" width="124" height="79" rx="11"/>
                    <rect x="639" y="199.500" width="124" height="79" rx="11"/>
                    <rect x="759" y="338.500" width="124" height="79" rx="11"/>
                    <rect x="952" y="248" width="124" height="79" rx="11"/>
                </g>
                <g class="output">
                    <ellipse cx="466" cy="361.500" rx="61.500" ry="39"/>
                    <ellipse cx="563.500" cy="284" rx="61.500" ry="39"/>
                    <ellipse cx="674" cy="427.500" rx="61.500" ry="39"/>
                    <ellipse cx="862.500" cy="254" rx="61.500" ry="39"/>
                    <ellipse cx="974" cy="422" rx="61.500" ry="39"/>
                    <ellipse cx="1164" cy="286.500" rx="61.500" ry="39"/>
                </g>
                <ellipse class="input" cx="179" cy="374" rx="61.500" ry="39"/>
                <ellipse class="env" cx="256.500" cy="459.500" rx="46" ry="29"/>
                <use href="#hammer" x="424" y="188" width="19" height="18"/>
                <use href="#hammer" x="312" y="273" width="19" height="18"/>
                <use href="#hammer" x="520" y="410" width="19" height="18"/>
                <use href="#hammer" x="692" y="200" width="19" height="18"/>
                <use href="#hammer" x="812" y="339.500" width="19" height="18"/>
                <use href="#script" x="1006" y="250" width="16" height="17"/>
                <g class="names">
                    <text x="418" y="230" textLength="30">Slope</text>
                    <text x="282" y="315" textLength="77">Project Raster</text>
                    <text x="501.500" y="452" textLength="55">Reclassify</text>
                    <text x="653" y="242" textLength="94.500">Raster to Polygon</text>
                    <text x="798" y="381.500" textLength="45">Dissolve</text>
                    <text x="976" y="285" textLength="74">Add Geometry</text>
                    <text x="988.500" y="297" textLength="51">Attributes</text>
                    <text x="1125.500" y="285" textLength="75">Modified Input</text>
                    <text x="1140.500" y="297" textLength="46">Features</text>
                    <text x="137" y="377.500" textLength="84">mask_boundRY</text>
                    <text x="424.500" y="353" textLength="83">mask_boundRY</text>
                    <text x="427" y="365.500" textLength="79">_ProjectRaster</text>
                    <text x="463" y="377.500">1</text>
                    <text x="521.500" y="287.500" textLength="84">Slope_mask_b2</text>
                    <text x="635.500" y="431" textLength="79">Reclass_Slop2</text>
                    <text x="823" y="252" textLength="79">RasterT_Recla</text>
                    <text x="853" y="264" textLength="19">ss3</text>
                    <text x="934.500" y="420" textLength="79">RasterT_Recla</text>
                    <text x="939" y="432" textLength="70">ss3_Dissolve</text>
                    <text x="238" y="452" textLength="35">Output</text>
                    <text x="227.500" y="464" textLength="57">Coordinate</text>
                    <text x="237.500" y="476" textLength="37">System</text>
                    <text x="232" y="331">P</text><text x="294" y="430.500">P</text><text x="1027" y="379">P</text>
                </g>
                <circle class="click" cx="520" cy="409" r="23.500"/>
                <path class="move" d="M534 416.500l3 3h-2v3h3v-2l3 3-3 3v-2h-3v3h2l-3 3-3-3h2v-3h-3v2l-3-3 3-3v2h3v-3h-2z"/>
            </svg>
            <div class="vscroll"><svg class="arr"><use href="#up"/></svg><div class="thumb"></div><svg class="arr"><use href="#down"/></svg></div>
        </div>
        <div class="hscroll"><svg class="arr"><use href="#left"/></svg><div class="thumb"></div><svg class="arr"><use href="#right"/></svg><div class="grip"></div></div>
    </div>

    <script src="script.js"></script>
</body>
</html>
```
FILE: styles.css
```
* {
    box-sizing: border-box;
}

body {
    margin: 0;
    width: 1280px;
    height: 720px;
    overflow: hidden;
    display: flex;
    flex-direction: column;
    position: relative;
    font-family: 'Open Sans', 'Noto Sans', sans-serif;
    font-size: 11px;
    color: #222;
    background: #f0f1ef;
}

.sprite {
    position: absolute;
    width: 0;
    height: 0;
}

svg {
    flex: none;
    display: block;
}

/* Title and menus */
.titlebar {
    height: 22px;
    display: flex;
    align-items: center;
    padding: 0 0 1px 2px;
    background: #fdfefd;
    color: #8b8b8b;
}

.app-icon {
    width: 16px;
    height: 16px;
    margin-right: 4px;
}

.win-buttons {
    width: 100px;
    height: 20px;
    margin-left: auto;
}

.titlebar .win-buttons {
    margin-right: 13px;
}

.menubar {
    height: 24px;
    display: flex;
    align-items: center;
    gap: 15px;
    padding: 0 0 2px 12px;
    letter-spacing: -.2px;
    background: linear-gradient(90deg, #eeefee, #f7f8f7);
}

/* Toolbars */
.toolrow {
    height: 24px;
    display: flex;
    background: linear-gradient(#f9faf9, #eff0ef);
    border-bottom: 1px solid #f8f8f8;
}

.toolbar {
    display: flex;
    align-items: center;
    flex: none;
    padding-left: 3px;
}

.standard { width: 584px; }
.classification { width: 114px; }
.drawing { width: 582px; }
.nav { width: 383px; }
.layout { width: 364px; }
.georef { width: 533px; }

.tools {
    display: flex;
    align-items: center;
    flex: none;
}

.tb {
    width: 20.6px;
    height: 21px;
    padding: 2px 2.3px;
}

.tb svg {
    width: 16px;
    height: 16px;
}

.tb.on {
    background: #dcebf8;
    outline: 1px solid #82b4dd;
    outline-offset: -1px;
}

.layout .tb.on {
    background: #e6ebf2;
    outline-color: #aab4c4;
}

.sep {
    width: 3.5px;
    height: 14px;
    border-left: 1px solid #bcbcbc;
    margin-left: 2px;
}

.window-tools .sep {
    margin-left: 2.2px;
}

.grip-dots {
    width: 2px;
    height: 14px;
    margin: 0 2px;
    background: repeating-linear-gradient(#b0b0b0 0 2px, transparent 2px 4px);
}

.caret {
    width: 6px;
    height: 3px;
    border: 3px solid transparent;
    border-top-color: #222;
    border-bottom: 0;
    margin: 1px 1.5px 0;
}

.space {
    width: 3px;
}

.overflow {
    width: 10px;
    height: 22px;
    margin-left: auto;
    margin-right: 3px;
    background: linear-gradient(#e8e8e8, #bfbfbf);
    position: relative;
}

.overflow::after {
    content: "";
    position: absolute;
    left: 2px;
    bottom: 3px;
    border: 3px solid transparent;
    border-top-color: #111;
    border-bottom: 0;
}

.overflow::before {
    content: "";
    position: absolute;
    left: 2px;
    bottom: 8px;
    width: 6px;
    height: 1px;
    background: #222;
}

.overflow.dots {
    background:
        linear-gradient(#444, #444) 2px 2px / 2px 2px no-repeat,
        linear-gradient(#444, #444) 6px 2px / 2px 2px no-repeat,
        linear-gradient(#e8e8e8, #bfbfbf);
}

.label {
    margin: -2px 0 0 3px;
    white-space: nowrap;
}

.classification .label { width: 70px; }
.drawing .label { width: 43px; letter-spacing: -.1px; }
.georef .label { width: 77px; letter-spacing: -.25px; margin-left: 2px; }

.combo {
    height: 19px;
    display: flex;
    align-items: center;
    flex: none;
    padding: 0 3px;
    background: #fff;
    border: 1px solid #7d7d7d;
    font-family: 'Liberation Sans', Arial, sans-serif;
    font-size: 11px;
}

.combo svg {
    width: 10px;
    height: 10px;
    margin-left: auto;
}

.scale {
    width: 139px;
    margin: -2px 0 0 2px;
    letter-spacing: -.2px;
}

.font { width: 160px; margin-left: -1px; }
.size { width: 43px; }

.layer {
    width: 168px;
    background: #e1e1e1;
    border-color: #b5b5b5;
    letter-spacing: -.2px;
}

.percent {
    width: 56px;
    border-color: #ccc;
    color: #39608d;
}

.percent em {
    font-style: normal;
    background: #3b93ea;
    padding: 0 1px;
    margin-left: -2px;
    letter-spacing: -.7px;
}

.font-badge {
    width: 11px;
    height: 13px;
    margin-right: 5px;
    border: 1px solid #6b8cba;
    background: #e2ecf7;
    color: #177c68;
    font: italic bold 11px/11px 'Liberation Serif', serif;
    text-align: center;
}

.letter {
    width: 20.6px;
    text-align: center;
    font-family: 'Liberation Serif', serif;
    font-size: 12.5px;
    font-weight: bold;
}

.letter.big {
    font-size: 16px;
}

.letter.color {
    border-bottom: 3px solid #000;
    width: 16px;
    margin: 0 2px 0 4px;
    line-height: 13px;
}

.textbox {
    width: 68px;
    height: 17px;
    margin-left: 4px;
    background: #fff;
    border: 1px solid #555;
}

/* Main area */
main {
    height: 569px;
    display: flex;
    border-top: 2px solid #8b8e8f;
}

.toc {
    width: 281px;
    border-right: 2px solid #b2b5b5;
    border-bottom: 2px solid #9c9f9f;
    display: flex;
    flex-direction: column;
}

.toc-title {
    height: 17px;
    line-height: 15px;
    padding-left: 4px;
    background: #c2d0df;
    letter-spacing: -.15px;
}

.toc-tools {
    height: 25px;
    padding-left: 4px;
    background: #f2f3f2;
}

.tree {
    flex: 1;
    background: #fdfefd;
    border-top: 1px solid #999;
    border-left: 1px solid #999;
    letter-spacing: -.2px;
}

.row {
    height: 17px;
    display: flex;
    align-items: center;
    padding-left: 7px;
}

.row.child {
    padding-left: 25px;
    height: 16px;
}

.expander {
    width: 9px;
    height: 9px;
    border: 1px solid #9a9a9a;
    background: linear-gradient(#444, #444) center / 5px 1px no-repeat;
}

.layer-icon {
    width: 16px;
    height: 15px;
    margin: 0 3px 0 5px;
}

.selected {
    background: #3691f0;
    color: #fff;
    padding: 0 1px;
    line-height: 16px;
    letter-spacing: -.4px;
}

.checkbox {
    width: 11px;
    height: 11px;
    border: 1px solid #333;
    margin: 0 7px;
}

.value {
    margin-left: 77px;
    line-height: 15px;
}

.legend {
    display: flex;
    margin-left: 55px;
}

.ramp {
    width: 12px;
    height: 34px;
    margin: 2px 5px 0 0;
    background: linear-gradient(#fff, #000);
}

.range {
    height: 49px;
    margin-top: -1px;
    display: flex;
    flex-direction: column;
    justify-content: space-between;
}

.mapview {
    width: 958px;
    margin-left: 5px;
    border-left: 1px solid #5e6366;
    display: flex;
    flex-direction: column;
}

.map {
    flex: 1;
    background: #fdfefd;
    position: relative;
}

.raster {
    position: absolute;
    left: 191px;
    top: 427px;
    width: 454px;
    height: 82px;
    shape-rendering: crispEdges;
}

/* sits over the map and its scroll bar */
.watermark {
    position: absolute;
    z-index: 1;
    left: 719px;
    top: 514px;
    color: #bdbfbe;
    white-space: nowrap;
}

.watermark p {
    margin: 0;
}

.wm-title {
    font-size: 17px;
    line-height: 22px;
    letter-spacing: .5px;
}

.wm-sub {
    font-size: 13px;
    line-height: 19px;
    letter-spacing: .25px;
}

.map-bottom {
    height: 15px;
    margin-bottom: 2px;
    border-top: 1px solid #ddd;
    display: flex;
}

.view-tabs {
    width: 74px;
    height: 14px;
}

.arr {
    width: 10px;
    height: 10px;
    margin: 2px 1px;
}

.map-bottom .arr {
    margin-left: 0;
}

.map-bottom .arr:last-child {
    margin-right: 4px;
}

.thumb {
    flex: 1;
    background: #c9cbc9;
}

.map-bottom .thumb {
    margin: 0 4px 0 1px;
}

.map-scroll {
    width: 14px;
    height: 549px;
    display: flex;
    flex-direction: column;
    align-items: center;
}

.map-scroll .thumb {
    width: 12px;
    margin-top: 14px;
}

.dock {
    width: 13px;
    margin-left: 4px;
    padding-top: 2px;
}

.tab {
    width: 13px;
    height: 65px;
    border: 1px solid #999;
    border-right: 0;
    border-radius: 3px 0 0 3px;
    background: #f6f7f6;
    padding: 4px 0 0 1px;
    font-size: 10px;
    color: #777;
}

.tab svg {
    width: 11px;
    height: 15px;
    margin-bottom: 3px;
}

.tab span {
    display: block;
    width: 11px;
    writing-mode: vertical-rl;
    line-height: 11px;
    letter-spacing: .3px;
}

.edge {
    width: 5px;
    background:
        linear-gradient(#555, #555) 0 191px / 5px 1px no-repeat,
        repeating-linear-gradient(#b889a9 0 2px, #7fa8a0 2px 4px, #a8a2c8 4px 6px) 0 201px / 5px 28px no-repeat,
        repeating-linear-gradient(#544c68 0 2px, #5f7770 2px 4px) 0 295px / 5px 69px no-repeat,
        linear-gradient(#c9cbc9, #c9cbc9) 0 411px / 5px 14px no-repeat,
        linear-gradient(#3d7565, #3d7565) 0 426px / 5px 2px no-repeat,
        linear-gradient(#8b8b8b, #b5b5b5 40%, #888) 0 428px / 5px 79px no-repeat,
        linear-gradient(#c9cbc9, #c9cbc9) 0 551px / 5px 14px no-repeat,
        #fbfcfb;
}

.statusbar {
    height: 20px;
    display: flex;
    align-items: center;
    padding-left: 1023px;
    background: #ebedeb;
    border-bottom: 1px solid #bbb;
    letter-spacing: -.35px;
}

.statusbar svg {
    width: 15px;
    height: 15px;
    margin-right: 6px;
}

/* Taskbar */
.taskbar {
    height: 37px;
    display: flex;
    background: #04060a;
    color: #eee;
}

.start {
    width: 45px;
    padding: 12px 15px;
}

.start svg {
    width: 15px;
    height: 15px;
}

.search {
    width: 322px;
    background: #333531;
    display: flex;
    align-items: center;
    padding: 0 12px 0 9px;
}

.search svg {
    width: 13px;
    height: 18px;
    margin-left: auto;
}

.ring {
    width: 19px;
    height: 19px;
    border: 3px solid #f0f0f0;
    border-radius: 50%;
    margin-right: 10px;
}

.hint {
    font-size: 13px;
    color: #a2a4a1;
}

.task {
    width: 46px;
    display: flex;
    justify-content: center;
    padding-top: 8px;
}

.task svg {
    width: 21px;
    height: 21px;
}

.task.open {
    background: linear-gradient(#76b0e8, #76b0e8) center bottom / 38px 2px no-repeat;
}

.task.active {
    background: linear-gradient(#76b0e8, #76b0e8) center bottom / 45px 2px no-repeat, #33373b;
}

.word {
    font: bold 16px 'Liberation Serif', serif;
    fill: #2459a9;
}

.tray {
    margin-left: auto;
    padding-top: 8px;
}

.tray svg {
    width: 131px;
    height: 22px;
}

.clock {
    width: 73px;
    padding-top: 2px;
    display: flex;
    flex-direction: column;
    text-align: center;
    line-height: 16px;
    letter-spacing: -.2px;
}

/* Model window */
.window {
    position: absolute;
    z-index: 2;
    left: 97px;
    top: 100px;
    width: 1135px;
    height: 424px;
    display: flex;
    flex-direction: column;
    background: #fdfefd;
    border: 1px solid #3f86bd;
    border-right: 2px solid #3f719a;
    border-bottom: 2px solid #3f719a;
    box-shadow: 2px 4px 10px rgba(40, 60, 80, .4);
}

.window-title {
    height: 28px;
    display: flex;
    align-items: center;
    padding: 0 11px 1px 6px;
}

.model-icon {
    width: 17px;
    height: 15px;
    margin-right: 4px;
}

.window .menubar {
    padding: 0 0 1px 11px;
}

.window-tools {
    height: 25px;
    padding-left: 3px;
    background: linear-gradient(#f9faf9, #f0f1f0);
    border-bottom: 1px solid #777;
}

.window-body {
    height: 329px;
    display: flex;
}

.canvas {
    width: 1117px;
    height: 329px;
}

.vscroll {
    width: 15px;
    display: flex;
    flex-direction: column;
    align-items: center;
    background: #eff0ef;
    padding: 0 0 2px;
}

.vscroll .thumb {
    width: 14px;
    margin: 10px 0 2px;
}

.vscroll .arr,
.map-scroll .arr {
    margin: 3px 0 2px;
}

.hscroll {
    height: 15px;
    display: flex;
    background: #eff0ef;
    padding-left: 2px;
}

.hscroll .thumb {
    margin: 0 30px 1px 2px;
}

.grip {
    width: 9px;
    height: 9px;
    margin: 5px 3px 0 5px;
    background: radial-gradient(#aaa 35%, transparent 40%) 0 0 / 3px 3px;
    clip-path: polygon(100% 0, 100% 100%, 0 100%);
}

.shadow {
    fill: #969896;
}

.links path {
    stroke: #333;
    stroke-width: .9;
    marker-end: url(#head);
}

.tool rect,
.output ellipse,
.input,
.env {
    stroke: #4c4c3c;
    fill: #fdca31;
}

.output ellipse {
    fill: #66cc66;
    stroke: #2d4d2d;
}

.input {
    fill: #0397cd;
    stroke: #123;
}

.env {
    fill: #00c8fe;
    stroke: #123;
}

.names {
    font: bold 11px 'Liberation Sans', Arial, sans-serif;
    fill: #151510;
}

.click {
    fill: #ffee00;
    opacity: .62;
}

.move {
    fill: #111;
    stroke: #fff;
    stroke-width: 1.2;
    paint-order: stroke;
}
```
FILE: script.js
```
// Fill the toolbars from their icon lists
var special = { '|': 'sep', ':': 'grip-dots', 'v': 'caret', '_': 'space' };

document.querySelectorAll('.tools').forEach(function (bar) {
    bar.dataset.icons.split(' ').forEach(function (name) {
        if (special[name]) {
            bar.innerHTML += '<span class="' + special[name] + '"></span>';
            return;
        }
        var on = name.endsWith('*') ? ' on' : '';
        bar.innerHTML += '<span class="tb' + on + '"><svg><use href="#' + name.replace('*', '') + '"/></svg></span>';
    });
});

// Raster cells: first column of each row, then grey values
var rows = [
    [0, 125, 150, 150, 158, 163, 188, 192, 186, 172, 155, 153, 150, 148, 147, 146, 152, 143, 145, 148, 150, 158, 172, 196, 215, 235, 244, 244, 242, 236, 226, 218, 208, 208, 200, 190, 188, 172, 150],
    [0, 122, 148, 150, 155, 163, 192, 198, 188, 176, 150, 147, 143, 140, 138, 126, 158, 158, 156, 150, 155, 165, 178, 200, 222, 242, 248, 248, 246, 240, 226, 214, 206, 198, 194, 188, 180, 165, 148],
    [1, 145, 150, 156, 145, 176, 180, 182, 176, 164, 135, 125, 122, 122, 126, 138, 160, 164, 142, 136, 142, 155, 178, 205, 228, 248, 251, 251, 246, 234, 214, 200, 194, 186, 182, 172, 165, 155],
    [2, 152, 158, 166, 172, 174, 172, 162, 140, 118, 106, 104, 114, 124, 134, 136, 134, 128, 126, 136, 152, 180, 208, 228, 242, 249, 250, 236, 216, 200, 190, 184, 178, 170, 164, 156, 150],
    [2, 156, 162, 154, 144, 144, 144, 146, 132, 110, 98, 102, 112, 126, 126, 116, 130, 124, 126, 134, 150, 178, 208, 224, 238, 240, 236, 224, 206, 196, 186, 178, 164, 150, 142, 138, 136],
    [16, 120, 136, 128, 124, 134, 148, 150, 178, 206, 222, 226, 228, 218, 204, 194, 180, 168, 162, 152, 144, 136, 132],
    [31, 160, 152, 142, 132, 126, 122, 120]
];
var svg = '';
var tops = [0, 10, 21, 33, 45, 57, 69, 81];
rows.forEach(function (row, y) {
    row.slice(1).forEach(function (g, i) {
        var col = row[0] + i;
        var x = Math.round(col * 11.93);
        var w = Math.round((col + 1) * 11.93) - x;
        svg += '<rect x="' + x + '" y="' + tops[y] + '" width="' + w + '" height="' + (tops[y + 1] - tops[y]) + '" fill="rgb(' + g + ',' + g + ',' + g + ')"/>';
    });
});
document.getElementById('raster').innerHTML = svg;
```
